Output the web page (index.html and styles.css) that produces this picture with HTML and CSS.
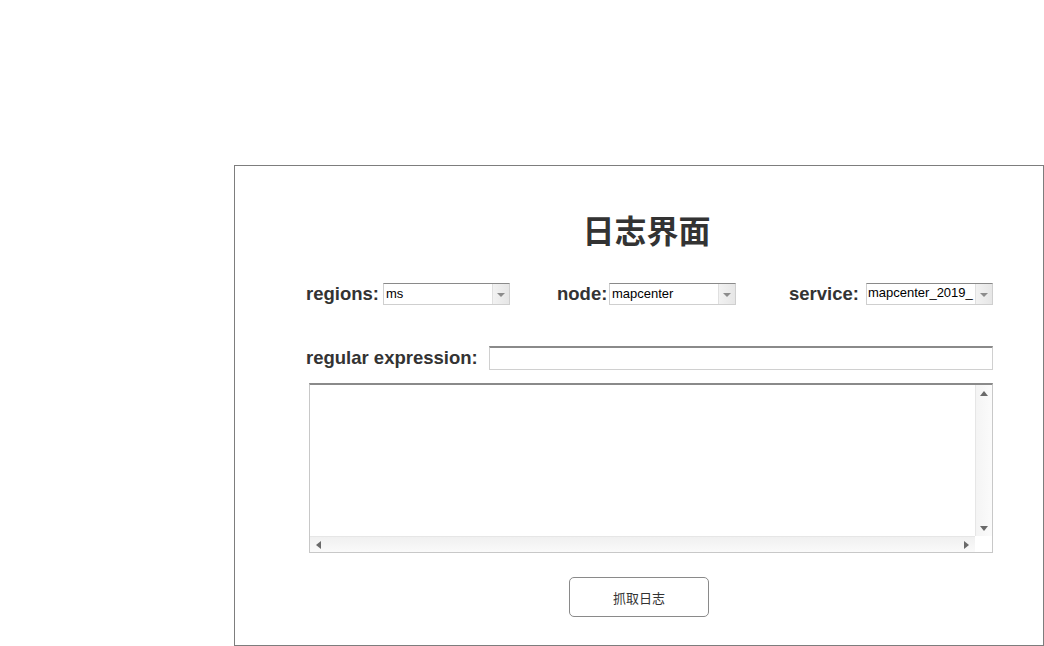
FILE: index.html
```html
<!DOCTYPE html>
<html lang="zh">
<head>
<meta charset="utf-8">
<title>日志界面</title>
<link rel="stylesheet" href="styles.css">
</head>
<body>
<div class="panel">
  <div class="inner">
    <h1 class="title">日志界面</h1>
    <div class="row-selects">
      <div class="field f-regions">
        <span class="label">regions:</span>
        <div class="select"><span class="sel-text">ms</span><span class="sel-arrow"><span class="tri-down"></span></span></div>
      </div>
      <div class="field f-node">
        <span class="label">node:</span>
        <div class="select"><span class="sel-text">mapcenter</span><span class="sel-arrow"><span class="tri-down"></span></span></div>
      </div>
      <div class="field f-service">
        <span class="label">service:</span>
        <div class="select"><span class="sel-text sel-top">mapcenter_2019_</span><span class="sel-arrow"><span class="tri-down"></span></span></div>
      </div>
    </div>
    <div class="row-regex">
      <span class="label">regular expression:</span>
      <div class="text-input"></div>
    </div>
    <div class="textarea">
      <div class="ta-body">
        <div class="ta-content"></div>
        <div class="vscroll"><span class="tri-up"></span><span class="tri-down2"></span></div>
      </div>
      <div class="ta-bottom">
        <div class="hscroll"><span class="tri-left"></span><span class="tri-right"></span></div>
        <div class="corner"></div>
      </div>
    </div>
    <div class="row-button">
      <button class="btn">抓取日志</button>
    </div>
  </div>
</div>
</body>
</html>
```
FILE: styles.css
```css
html, body {
  margin: 0;
  padding: 0;
  background: #ffffff;
}
body {
  font-family: "Liberation Sans", Arial, "Noto Sans CJK SC", sans-serif;
  color: #333333;
}
.panel {
  margin-left: 234px;
  margin-top: 165px;
  width: 808px;
  height: 479px;
  border: 1px solid #7d7d7d;
}
.inner {
  padding-left: 71px;
  width: 687px;
  display: flex;
  flex-direction: column;
}
.title {
  margin: 0;
  padding-top: 44px;
  height: 38px;
  line-height: 38px;
  font-size: 32px;
  font-weight: bold;
  text-align: center;
  font-family: "Noto Sans CJK SC", sans-serif;
  color: #333333;
  margin-right: 6px;
}
.row-selects {
  display: flex;
  align-items: center;
  margin-top: 35px;
  height: 22px;
}
.field {
  display: flex;
  align-items: center;
}
.f-node { margin-left: 47px; }
.f-service { margin-left: 53px; }
.label {
  font-size: 18.5px;
  font-weight: bold;
  color: #333333;
  white-space: nowrap;
}
.f-regions .label { margin-right: 4px; }
.f-node .label { margin-right: 2px; width: 50px; }
.f-service .label { margin-right: 7px; width: 70px; }
.select {
  width: 125px;
  height: 20px;
  border: 1px solid #cfcfcf;
  border-top-color: #8a8a8a;
  display: flex;
  background: #fff;
}
.sel-text {
  flex: 1;
  font-size: 13px;
  line-height: 20px;
  padding-left: 2px;
  color: #000;
  overflow: hidden;
  white-space: nowrap;
}
.sel-text.sel-top { line-height: 17px; padding-left: 1px; }
.sel-arrow {
  width: 16px;
  height: 20px;
  background: linear-gradient(to right, #f2f2f2, #e6e6e6);
  border-left: 1px solid #e0e0e0;
  display: flex;
  align-items: center;
  justify-content: center;
}
.tri-down {
  width: 0;
  height: 0;
  border-left: 4px solid transparent;
  border-right: 4px solid transparent;
  border-top: 4px solid #8c8c8c;
  margin-top: 2px;
}
.row-regex {
  display: flex;
  align-items: center;
  margin-top: 40px;
  height: 25px;
}
.row-regex .label { margin-right: 11px; }
.text-input {
  flex: 1;
  height: 21px;
  border: 1px solid #d0d0d0;
  border-top: 2px solid #8a8a8a;
  background: #fff;
}
.textarea {
  margin-top: 13px;
  margin-left: 3px;
  width: 682px;
  height: 167px;
  border: 1px solid #c8c8c8;
  border-top: 2px solid #8a8a8a;
  display: flex;
  flex-direction: column;
}
.ta-body {
  flex: 1;
  display: flex;
}
.ta-content { flex: 1; }
.vscroll {
  width: 16px;
  border-left: 1px solid #e6e6e6;
  background: linear-gradient(to right, #f4f4f4, #fbfbfb);
  display: flex;
  flex-direction: column;
  justify-content: space-between;
  align-items: center;
  padding: 6px 0 5px;
}
.tri-up {
  width: 0; height: 0;
  border-left: 4px solid transparent;
  border-right: 4px solid transparent;
  border-bottom: 5px solid #6a6a6a;
}
.tri-down2 {
  width: 0; height: 0;
  border-left: 4px solid transparent;
  border-right: 4px solid transparent;
  border-top: 5px solid #6a6a6a;
}
.ta-bottom {
  height: 16px;
  display: flex;
}
.hscroll {
  flex: 1;
  border-top: 1px solid #e6e6e6;
  background: linear-gradient(to bottom, #f0f0f0, #fafafa);
  display: flex;
  align-items: center;
  justify-content: space-between;
  padding: 0 6px 0 6px;
}
.tri-left {
  width: 0; height: 0;
  border-top: 4px solid transparent;
  border-bottom: 4px solid transparent;
  border-right: 5px solid #6a6a6a;
}
.tri-right {
  width: 0; height: 0;
  border-top: 4px solid transparent;
  border-bottom: 4px solid transparent;
  border-left: 5px solid #6a6a6a;
}
.corner {
  width: 17px;
  background: #fff;
}
.row-button {
  margin-top: 24px;
  display: flex;
  padding-left: 263px;
}
.btn {
  width: 140px;
  height: 40px;
  border: 1px solid #8a8a8a;
  border-radius: 5px;
  background: #fff;
  font-family: "Noto Sans CJK SC", sans-serif;
  font-size: 13px;
  color: #333;
  padding: 0;
}
```
